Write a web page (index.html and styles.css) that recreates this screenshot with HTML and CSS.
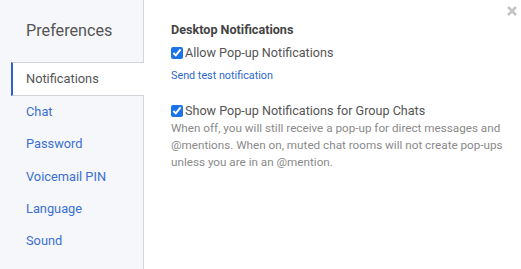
FILE: index.html
```html
<!DOCTYPE html>
<html lang="en">
  <head>
    <meta charset="UTF-8" />
    <meta name="viewport" content="width=device-width, initial-scale=1.0" />
    <title>Preferences</title>
    <link rel="stylesheet" href="styles.css">
  </head>

  <body>
    <div class="dialog">
      <!-- 左侧菜单 -->
      <div class="sidebar">
        <h2 class="title">Preferences</h2>
        <ul class="nav">
          <li class="nav-item active">Notifications</li>
          <li class="nav-item">Chat</li>
          <li class="nav-item">Password</li>
          <li class="nav-item">Voicemail PIN</li>
          <li class="nav-item">Language</li>
          <li class="nav-item">Sound</li>
        </ul>
      </div>

      <!-- 右侧内容 -->
      <div class="content">
        <h3 class="section-title">Desktop Notifications</h3>
        <label class="check-row">
          <input type="checkbox" checked />
          <span>Allow Pop-up Notifications</span>
        </label>
        <a href="#" class="test-link">Send test notification</a>

        <label class="check-row group">
          <input type="checkbox" checked />
          <span>Show Pop-up Notifications for Group Chats</span>
        </label>
        <p class="hint">
          When off, you will still receive a pop-up for direct messages and
          @mentions. When on, muted chat rooms will not create pop-ups unless
          you are in an @mention.
        </p>
      </div>

      <!-- 关闭按钮 -->
      <a href="#" class="close">
        <svg width="10" height="10" viewBox="0 0 10 10">
          <path d="M1 1 L9 9 M9 1 L1 9" stroke="#c4c4c4" stroke-width="2.6" />
        </svg>
      </a>
    </div>
  </body>
</html>
```

FILE: styles.css
```css
* {
  margin: 0;
  padding: 0;
  box-sizing: border-box;
}

body {
  font-family: Roboto, "Liberation Sans", sans-serif;
  background-color: #fff;
}

.dialog {
  width: 521px;
  height: 269px;
  display: flex;
  position: relative;
  overflow: hidden;
}

/* 左侧菜单 */
.sidebar {
  width: 144px;
  flex-shrink: 0;
  background-color: #f5f7fa;
  border-right: 1px solid #d3d6da;
}

.sidebar .title {
  font-size: 16.2px;
  font-weight: 400;
  color: #555;
  padding: 21px 0 0 26px;
  line-height: 20px;
  height: 62px;
}

.nav {
  list-style: none;
}

.nav-item {
  height: 32.3px;
  line-height: 32px;
  padding-left: 26px;
  font-size: 12.8px;
  color: #3b6fd2;
  cursor: pointer;
}

.nav-item.active {
  height: 34px;
  margin-left: 11px;
  margin-right: -1px;
  padding-left: 13px;
  line-height: 32px;
  color: #555;
  background-color: #fff;
  border-left: 2px solid #2f62c9;
  border-top: 1px solid #cfd3d8;
  border-bottom: 1px solid #cfd3d8;
}

/* 右侧内容 */
.content {
  flex: 1;
  padding: 22px 14px 0 27px;
  display: flex;
  flex-direction: column;
  align-items: flex-start;
}

.section-title {
  font-size: 12.6px;
  font-weight: 700;
  color: #444;
  line-height: 16px;
}

.check-row {
  display: flex;
  align-items: center;
  font-size: 12.6px;
  color: #555;
  line-height: 18px;
  margin-top: 6px;
}

.check-row input {
  width: 12px;
  height: 12px;
  margin: 0 2px 0 0;
  accent-color: #1a73e8;
}

.check-row.group {
  margin-top: 19px;
}

.test-link {
  font-size: 10.8px;
  color: #2f67cf;
  text-decoration: none;
  line-height: 15px;
  margin-top: 6px;
}

.hint {
  font-size: 11.7px;
  color: #8a8a8a;
  line-height: 17px;
  margin-top: 0;
  width: 340px;
}

.close {
  position: absolute;
  top: 6px;
  right: 4px;
  display: flex;
}
```
